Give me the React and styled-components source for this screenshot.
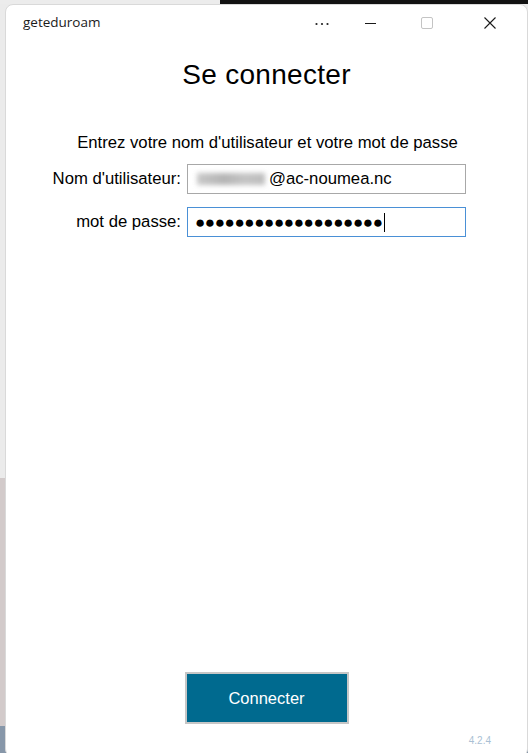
import React from 'react';
import styled, { createGlobalStyle } from 'styled-components';

const GlobalStyle = createGlobalStyle`
    html, body {
        margin: 0;
        padding: 0;
    }
    body {
        width: 528px;
        height: 753px;
        overflow: hidden;
        background:
            linear-gradient(to right, #ececec 0, #ececec 220px, #121212 220px) top left / 100% 4px no-repeat,
            linear-gradient(to bottom, #ebebeb 0, #ebebeb 478px, #d2caca 478px, #d2caca 726px, #8797a9 726px);
    }
`;

const Desktop = styled.div`
    padding: 4px 0 0 5px;
    height: 753px;
    box-sizing: border-box;
`;

const Window = styled.div`
    width: 523px;
    height: 753px;
    box-sizing: border-box;
    background: #ffffff;
    border: 1px solid #d9d9d9;
    border-radius: 8px;
    display: flex;
    flex-direction: column;
    font-family: "Liberation Sans", Arial, sans-serif;
    color: #000;
`;

const TitleBar = styled.div`
    height: 35px;
    display: flex;
    align-items: center;
    padding-left: 17px;
`;

const WindowTitle = styled.span`
    font-family: "Open Sans", "Noto Sans", sans-serif;
    font-size: 13.5px;
    color: #1b1b1b;
    flex: 1;
    margin-top: -1px;
`;

const Controls = styled.div`
    display: flex;
    align-items: center;
    padding-right: 30px;
`;

const ControlButton = styled.span`
    display: flex;
    width: 14px;
    height: 14px;
    margin-left: ${p => p.$ml}px;
    align-items: center;
    justify-content: center;
`;

const Content = styled.div`
    flex: 1;
    display: flex;
    flex-direction: column;
    align-items: center;
`;

const Heading = styled.h1`
    margin: 20px 0 0;
    font-size: 28px;
    font-weight: 400;
    line-height: 30px;
    letter-spacing: 0.3px;
`;

const Instruction = styled.p`
    margin: 44px 0 0;
    font-size: 16.7px;
    line-height: 18px;
    padding-left: 2px;
`;

const Form = styled.div`
    align-self: flex-start;
    margin-top: 12px;
    display: grid;
    grid-template-columns: 175px 279px;
    column-gap: 6px;
    row-gap: 13px;
    align-items: center;
`;

const Label = styled.label`
    text-align: right;
    font-size: 16.7px;
    white-space: nowrap;
`;

const Field = styled.div`
    height: 30px;
    box-sizing: border-box;
    border: 1px solid ${p => (p.$focused ? '#4a90d6' : '#a8a8a8')};
    display: flex;
    align-items: center;
    padding-left: 7px;
    font-size: 16.7px;
    overflow: hidden;
`;

const Redacted = styled.span`
    display: inline-block;
    width: 68px;
    height: 12px;
    margin: 0 4px 0 2px;
    background: linear-gradient(to right, #c8c8c8, #b4b4b4 40%, #c4c4c4 70%, #bdbdbd);
    filter: blur(2.5px);
`;

const Dots = styled.span`
    font-size: 17px;
    letter-spacing: -0.4px;
    line-height: 1;
`;

const Caret = styled.span`
    display: inline-block;
    width: 1px;
    height: 19px;
    background: #000;
    margin-left: 1px;
`;

const Spacer = styled.div`
    flex: 1;
`;

const Button = styled.button`
    width: 164px;
    height: 52px;
    background: #006a8f;
    border: 2px solid #c6c6c6;
    color: #ffffff;
    font-family: "Liberation Sans", Arial, sans-serif;
    font-size: 16.5px;
    padding: 0;
    cursor: pointer;
`;

const Version = styled.div`
    align-self: flex-end;
    margin: 11px 36px 9px 0;
    font-size: 10px;
    line-height: 12px;
    color: #a9bfd4;
`;

function Dots3() {
    return (
        <svg width="14" height="14" viewBox="0 0 14 14">
            <circle cx="1.5" cy="8" r="1.1" fill="#222" />
            <circle cx="7" cy="8" r="1.1" fill="#222" />
            <circle cx="12.5" cy="8" r="1.1" fill="#222" />
        </svg>
    );
}

function Minimize() {
    return (
        <svg width="14" height="14" viewBox="0 0 14 14">
            <line x1="1" y1="7.5" x2="12" y2="7.5" stroke="#1a1a1a" strokeWidth="1" />
        </svg>
    );
}

function Maximize() {
    return (
        <svg width="14" height="14" viewBox="0 0 14 14">
            <rect x="1.5" y="1.5" width="11" height="11" rx="1.5" fill="none" stroke="#c4c4c4" strokeWidth="1" />
        </svg>
    );
}

function Close() {
    return (
        <svg width="14" height="14" viewBox="0 0 14 14">
            <path d="M1.5 1.5 L12.5 12.5 M12.5 1.5 L1.5 12.5" stroke="#1a1a1a" strokeWidth="1.1" />
        </svg>
    );
}

export default function App() {
    return (
        <>
            <GlobalStyle />
            <Desktop>
                <Window>
                    <TitleBar>
                        <WindowTitle>geteduroam</WindowTitle>
                        <Controls>
                            <ControlButton $ml={0}><Dots3 /></ControlButton>
                            <ControlButton $ml={35}><Minimize /></ControlButton>
                            <ControlButton $ml={42}><Maximize /></ControlButton>
                            <ControlButton $ml={49}><Close /></ControlButton>
                        </Controls>
                    </TitleBar>
                    <Content>
                        <Heading>Se connecter</Heading>
                        <Instruction>Entrez votre nom d'utilisateur et votre mot de passe</Instruction>
                        <Form>
                            <Label>Nom d'utilisateur:</Label>
                            <Field>
                                <Redacted />
                                <span>@ac-noumea.nc</span>
                            </Field>
                            <Label>mot de passe:</Label>
                            <Field $focused>
                                <Dots>{'●'.repeat(19)}</Dots>
                                <Caret />
                            </Field>
                        </Form>
                        <Spacer />
                        <Button>Connecter</Button>
                        <Version>4.2.4</Version>
                    </Content>
                </Window>
            </Desktop>
        </>
    );
}
